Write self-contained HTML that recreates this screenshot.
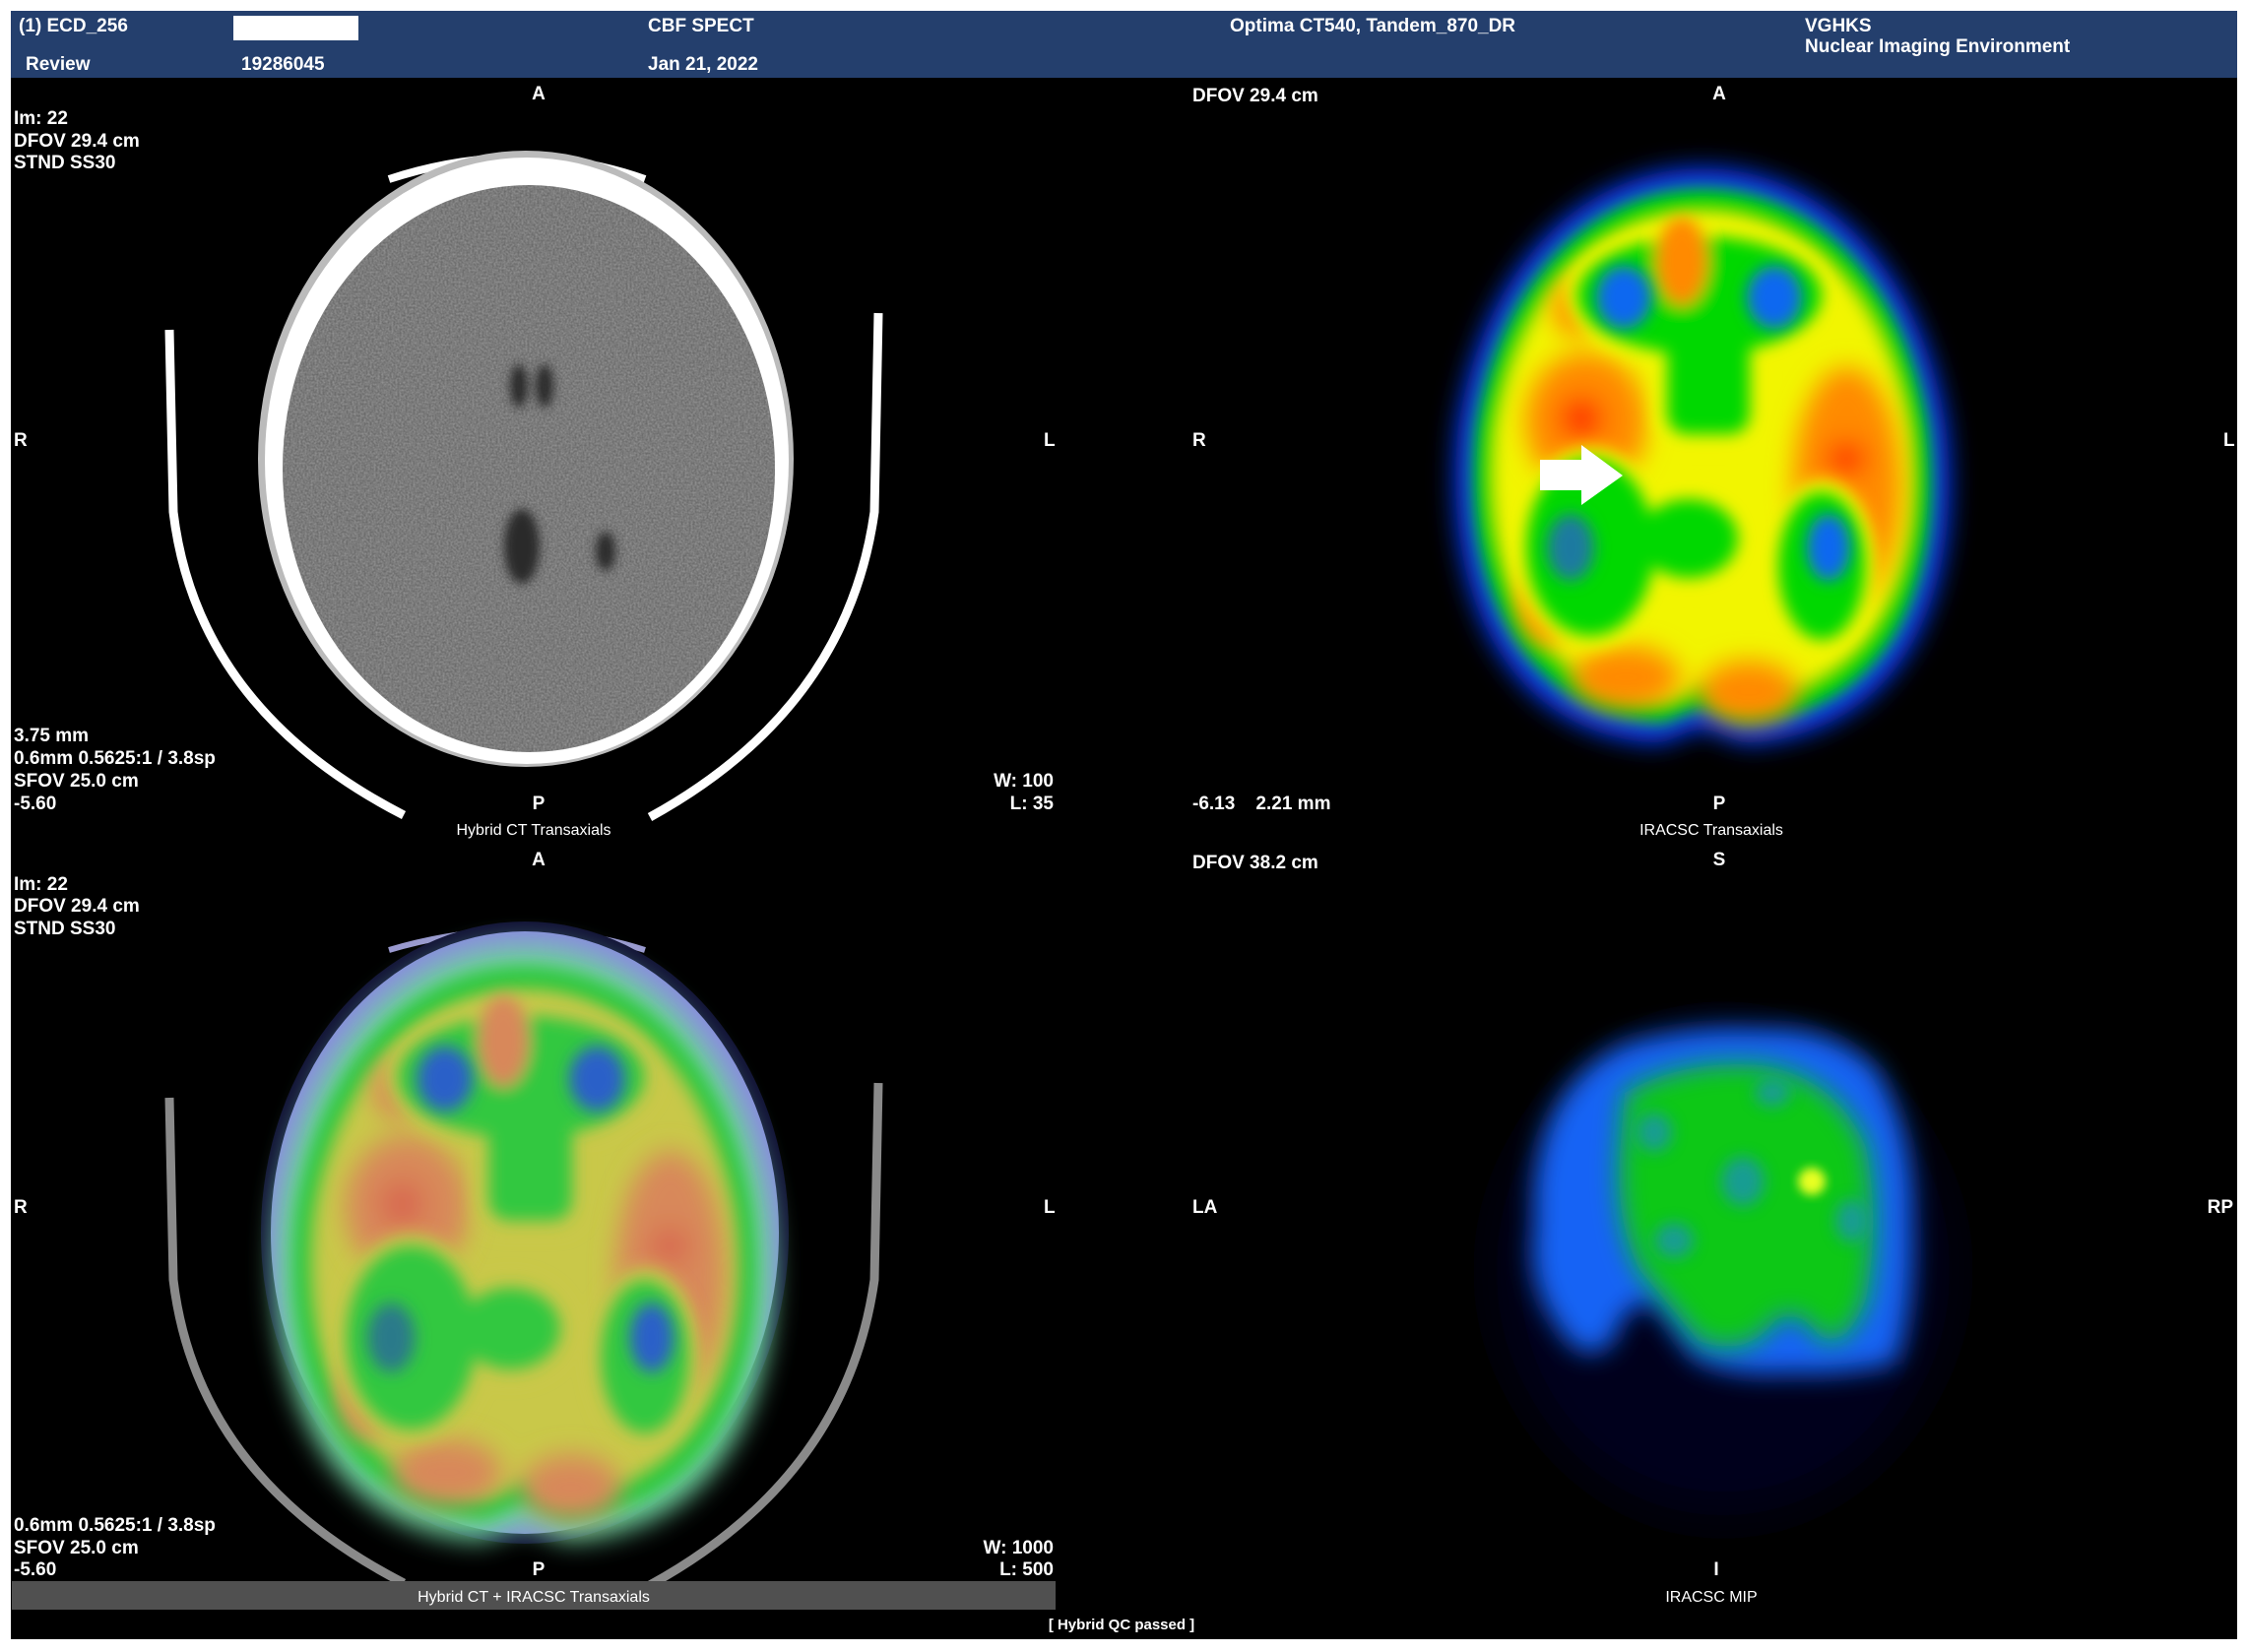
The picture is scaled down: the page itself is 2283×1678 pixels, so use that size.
<!DOCTYPE html>
<html><head><meta charset="utf-8"><style>
html,body{margin:0;padding:0;background:#fff;width:2283px;height:1678px;overflow:hidden}
svg{display:block}
text{font-family:"Liberation Sans",sans-serif;font-weight:bold;fill:#fff;font-size:19px}
.c{font-weight:normal;font-size:16px}
.b{fill:var(--b)}.g{fill:var(--g)}.y{fill:var(--y)}.o{fill:var(--o)}.r{fill:var(--r)}.bl{fill:var(--bl)}.gr{fill:var(--gr)}
</style></head><body>
<svg width="2283" height="1678" viewBox="0 0 2283 1678" xmlns="http://www.w3.org/2000/svg">
<defs>
<filter id="bl14" x="-30%" y="-30%" width="160%" height="160%"><feGaussianBlur stdDeviation="13"/></filter>
<filter id="bl9" x="-30%" y="-30%" width="160%" height="160%"><feGaussianBlur stdDeviation="8"/></filter>
<filter id="bl6" x="-30%" y="-30%" width="160%" height="160%"><feGaussianBlur stdDeviation="5"/></filter>
<filter id="bl25" x="-50%" y="-50%" width="200%" height="200%"><feGaussianBlur stdDeviation="25"/></filter>
<filter id="noise"><feTurbulence type="fractalNoise" baseFrequency="0.5" numOctaves="3" seed="3"/><feColorMatrix type="matrix" values="0 0 0 0 0.45  0 0 0 0 0.45  0 0 0 0 0.45  1.6 0 0 0 -0.35"/></filter>
<clipPath id="ctc"><ellipse cx="537" cy="476" rx="250" ry="288"/></clipPath>
<path id="egg" d="M258 8 C380 8 480 110 505 270 C525 440 460 585 300 592 L258 575 L215 592 C60 585 -8 440 10 270 C35 110 136 8 258 8 Z"/>
<g id="sp">
  <g filter="url(#bl14)">
    <use href="#egg" class="b"/>
  </g>
  <g filter="url(#bl9)">
    <use href="#egg" class="g" transform="translate(258,300) scale(0.93) translate(-258,-300)"/>
    <use href="#egg" class="y" transform="translate(258,302) scale(0.84) translate(-258,-302)"/>
  </g>
  <g filter="url(#bl14)">
    <ellipse class="o" cx="140" cy="265" rx="62" ry="70"/>
    <ellipse class="o" cx="405" cy="330" rx="55" ry="120"/>
    <ellipse class="o" cx="100" cy="450" rx="28" ry="42"/>
    <ellipse class="o" cx="180" cy="525" rx="55" ry="32"/>
    <ellipse class="o" cx="305" cy="540" rx="50" ry="32"/>
    <ellipse class="o" cx="130" cy="150" rx="24" ry="28"/>
    <ellipse class="r" cx="135" cy="262" rx="22" ry="22"/>
    <ellipse class="r" cx="404" cy="303" rx="20" ry="18"/>
  </g>
  <g filter="url(#bl9)">
    <ellipse class="y" cx="255" cy="137" rx="136" ry="72"/>
    <rect class="y" x="208" y="160" width="112" height="130" rx="30"/>
    <ellipse class="y" cx="144" cy="393" rx="78" ry="102"/>
    <ellipse class="y" cx="244" cy="384" rx="62" ry="52"/>
    <ellipse class="y" cx="379" cy="412" rx="56" ry="88"/>
  </g>
  <g filter="url(#bl9)">
    <ellipse class="g" cx="255" cy="137" rx="124" ry="60"/>
    <rect class="g" x="222" y="168" width="84" height="110" rx="20"/>
    <ellipse class="g" cx="144" cy="393" rx="65" ry="90"/>
    <ellipse class="g" cx="244" cy="384" rx="50" ry="40"/>
    <ellipse class="g" cx="379" cy="412" rx="44" ry="75"/>
    <ellipse class="o" cx="237" cy="102" rx="26" ry="45"/>
  </g>
  <g filter="url(#bl9)">
    <ellipse class="bl" cx="178" cy="139" rx="28" ry="32"/>
    <ellipse class="bl" cx="331" cy="139" rx="28" ry="32"/>
    <ellipse class="gr" cx="124" cy="393" rx="24" ry="34"/>
    <ellipse class="bl" cx="386" cy="393" rx="22" ry="34"/>
  </g>
</g>
</defs>
<rect x="11" y="11" width="2261" height="68" fill="#243f6d"/>
<rect x="11" y="79" width="2261" height="1586" fill="#000"/>
<rect x="237" y="16" width="127" height="25" fill="#fff"/>
<text x="19" y="32">(1) ECD_256</text>
<text x="658" y="32">CBF SPECT</text>
<text x="1249" y="32">Optima CT540, Tandem_870_DR</text>
<text x="1833" y="32">VGHKS</text>
<text x="1833" y="53">Nuclear Imaging Environment</text>
<text x="26" y="71">Review</text>
<text x="245" y="71">19286045</text>
<text x="658" y="71">Jan 21, 2022</text>

<!-- CT top-left -->
<path d="M172 335 L176 520 Q200 720 410 828" fill="none" stroke="#fff" stroke-width="9"/>
<path d="M892 318 L888 520 Q860 720 660 830" fill="none" stroke="#fff" stroke-width="9"/>
<path d="M395 182 Q530 138 655 182" fill="none" stroke="#fff" stroke-width="8"/>
<ellipse cx="534" cy="466" rx="272" ry="313" fill="#bbb"/>
<ellipse cx="535" cy="468" rx="266" ry="308" fill="#fff"/>
<ellipse cx="537" cy="476" rx="250" ry="288" fill="#6a6a6a"/>
<g clip-path="url(#ctc)"><rect x="280" y="180" width="520" height="590" filter="url(#noise)" opacity="0.55"/></g>
<g filter="url(#bl6)" fill="#2a2a2a">
<ellipse cx="527" cy="392" rx="9" ry="22"/><ellipse cx="553" cy="392" rx="9" ry="22"/>
<ellipse cx="530" cy="555" rx="18" ry="38"/><ellipse cx="615" cy="560" rx="10" ry="20"/>
</g>

<!-- SPECT top-right -->
<g transform="translate(1471,163)" style="--b:#0b3cff;--g:#00d800;--y:#f2f500;--o:#ff8a00;--r:#ff3300;--bl:#0a68f0;--gr:#1a7aa0">
<use href="#sp"/>
</g>
<path d="M1564 467 L1606 467 L1606 452 L1648 483 L1606 513 L1606 498 L1564 498 Z" fill="#fff"/>

<!-- Fused bottom-left -->
<path d="M172 1115 L176 1300 Q200 1500 410 1608" fill="none" stroke="#8a8a8a" stroke-width="9"/>
<path d="M892 1100 L888 1300 Q860 1500 660 1610" fill="none" stroke="#8a8a8a" stroke-width="9"/>
<path d="M395 965 Q530 925 655 965" fill="none" stroke="#9a9ad0" stroke-width="6"/>
<ellipse cx="533" cy="1252" rx="268" ry="316" fill="#121236"/>
<ellipse cx="533" cy="1252" rx="258" ry="306" fill="#8a8ae0"/>
<g transform="translate(272,952) scale(1.01,1.035)" style="--b:#6fd0a0;--g:#30c840;--y:#c9c84a;--o:#d8885a;--r:#d86850;--bl:#2a60c8;--gr:#2a7a8a">
<use href="#sp"/>
</g>

<!-- MIP bottom-right -->
<ellipse cx="1750" cy="1290" rx="230" ry="250" fill="#02031f" filter="url(#bl25)"/>
<g filter="url(#bl14)">
<path d="M1558 1210 Q1565 1100 1650 1060 Q1720 1040 1790 1045 Q1860 1042 1905 1085 Q1945 1150 1942 1240 Q1945 1330 1925 1385 Q1870 1398 1820 1395 Q1760 1400 1720 1380 Q1690 1340 1680 1325 Q1650 1320 1640 1360 Q1610 1395 1580 1345 Q1550 1300 1558 1250 Z" fill="#1763f5"/>
</g>
<g filter="url(#bl14)" fill="#08c818">
<path d="M1650 1110 Q1710 1075 1790 1082 Q1865 1095 1895 1165 Q1910 1240 1895 1320 Q1875 1370 1850 1360 Q1820 1320 1800 1345 Q1770 1380 1725 1362 Q1690 1320 1665 1290 Q1640 1240 1645 1170 Z"/>
</g>
<g filter="url(#bl9)" fill="#1a8ac8" opacity="0.7">
<ellipse cx="1770" cy="1200" rx="22" ry="25"/><ellipse cx="1680" cy="1150" rx="18" ry="20"/><ellipse cx="1700" cy="1260" rx="20" ry="18"/><ellipse cx="1880" cy="1240" rx="16" ry="22"/><ellipse cx="1800" cy="1110" rx="18" ry="14"/>
</g>
<circle cx="1840" cy="1200" r="14" fill="#e8ff20" filter="url(#bl6)"/>

<rect x="12" y="1606" width="1060" height="29" fill="#505050"/>

<g>
<text x="547" y="101" text-anchor="middle">A</text>
<text x="14" y="126">Im: 22</text>
<text x="14" y="149">DFOV 29.4 cm</text>
<text x="14" y="171">STND SS30</text>
<text x="14" y="453">R</text>
<text x="1060" y="453">L</text>
<text x="14" y="753">3.75 mm</text>
<text x="14" y="776">0.6mm 0.5625:1 / 3.8sp</text>
<text x="14" y="799">SFOV 25.0 cm</text>
<text x="14" y="822">-5.60</text>
<text x="547" y="822" text-anchor="middle">P</text>
<text x="1070" y="799" text-anchor="end">W: 100</text>
<text x="1070" y="822" text-anchor="end">L: 35</text>
<text x="542" y="848" text-anchor="middle" class="c">Hybrid CT Transaxials</text>

<text x="1211" y="103">DFOV 29.4 cm</text>
<text x="1746" y="101" text-anchor="middle">A</text>
<text x="1211" y="453">R</text>
<text x="2258" y="453">L</text>
<text x="1211" y="822">-6.13&#160;&#160;&#160;&#160;2.21 mm</text>
<text x="1746" y="822" text-anchor="middle">P</text>
<text x="1738" y="848" text-anchor="middle" class="c">IRACSC Transaxials</text>

<text x="547" y="879" text-anchor="middle">A</text>
<text x="14" y="904">Im: 22</text>
<text x="14" y="926">DFOV 29.4 cm</text>
<text x="14" y="949">STND SS30</text>
<text x="14" y="1232">R</text>
<text x="1060" y="1232">L</text>
<text x="14" y="1555">0.6mm 0.5625:1 / 3.8sp</text>
<text x="14" y="1578">SFOV 25.0 cm</text>
<text x="14" y="1600">-5.60</text>
<text x="547" y="1600" text-anchor="middle">P</text>
<text x="1070" y="1578" text-anchor="end">W: 1000</text>
<text x="1070" y="1600" text-anchor="end">L: 500</text>
<text x="542" y="1627" text-anchor="middle" class="c">Hybrid CT + IRACSC Transaxials</text>

<text x="1211" y="882">DFOV 38.2 cm</text>
<text x="1746" y="879" text-anchor="middle">S</text>
<text x="1211" y="1232">LA</text>
<text x="2268" y="1232" text-anchor="end">RP</text>
<text x="1743" y="1600" text-anchor="middle">I</text>
<text x="1738" y="1627" text-anchor="middle" class="c">IRACSC MIP</text>
<text x="1139" y="1655" text-anchor="middle" style="font-size:15px">[ Hybrid QC passed ]</text>
</g>
</svg>
</body></html>
